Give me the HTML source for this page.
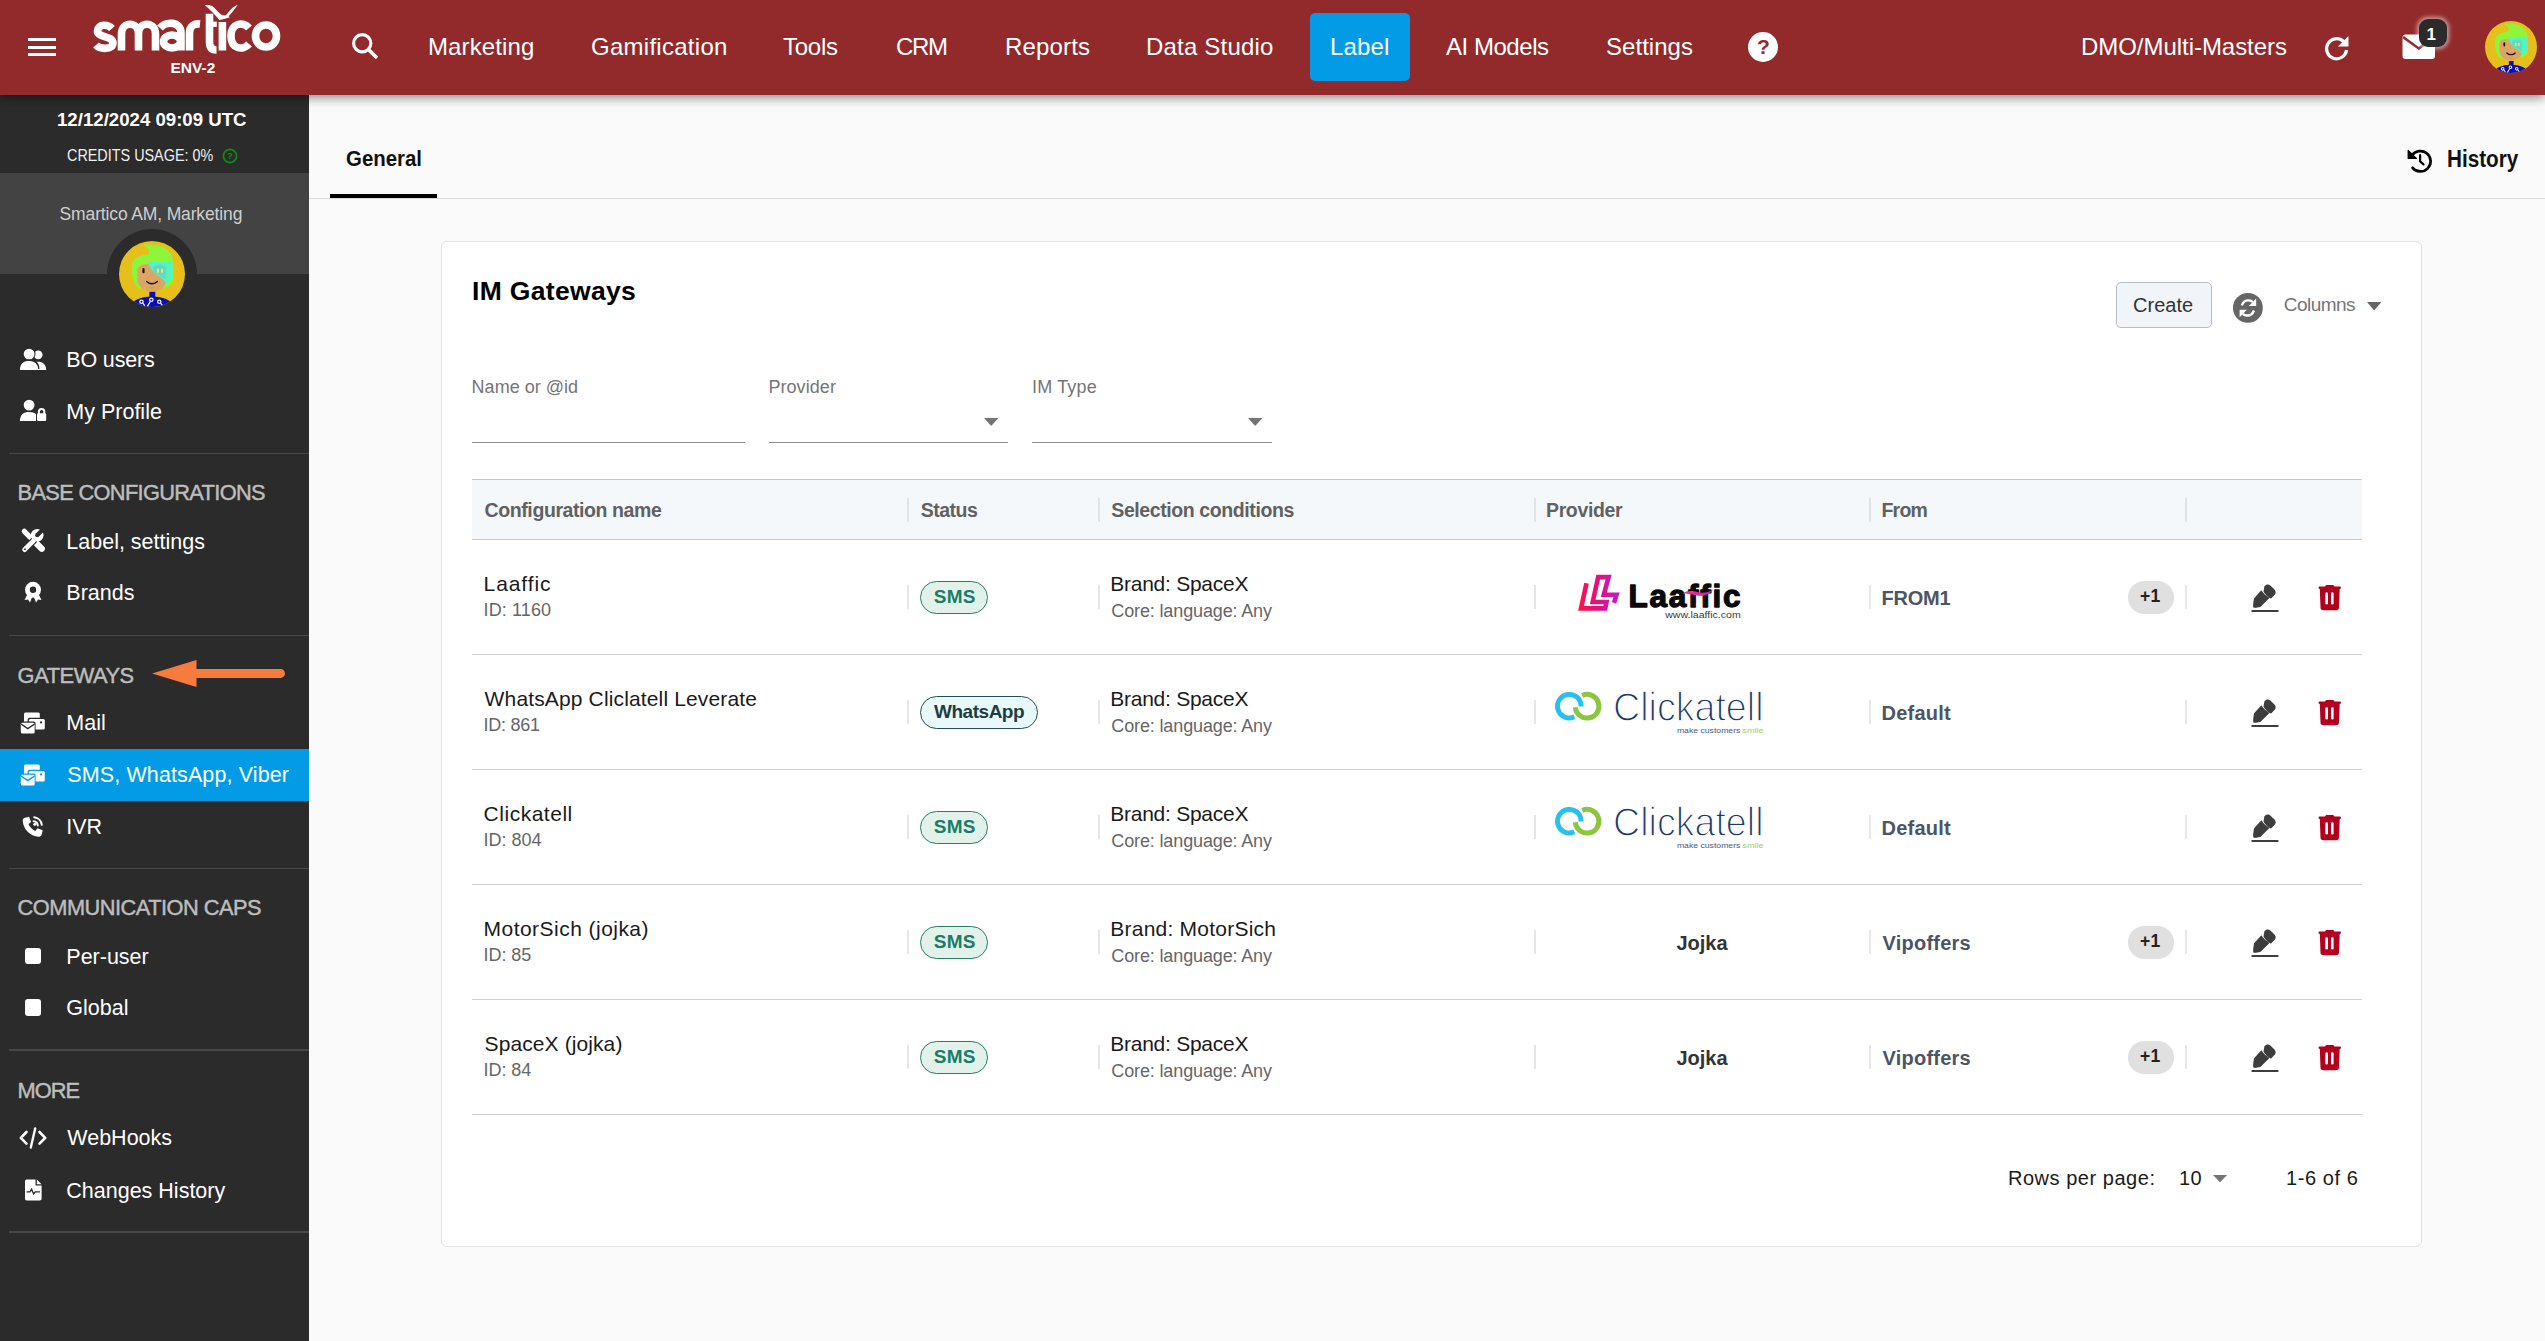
<!DOCTYPE html>
<html><head><meta charset="utf-8"><style>
*{box-sizing:border-box;margin:0;padding:0}
html,body{width:2545px;height:1341px;overflow:hidden;background:#fafafa;font-family:"Liberation Sans",sans-serif}
.a{position:absolute}
.t{position:absolute;white-space:nowrap;line-height:1}
svg{position:absolute;overflow:visible}
</style></head><body>
<div class="a" style="left:309px;top:95px;width:2236px;height:1246px;background:#fafafa"></div>
<div class="a" style="left:0;top:95px;width:309px;height:1246px;background:#2b2b2b"></div>
<div class="a" style="left:0;top:173px;width:309px;height:101px;background:#434343"></div>
<div class="a" style="left:107px;top:229px;width:90px;height:90px;border-radius:50%;background:#2b2b2b;clip-path:inset(0 0 45px 0)"></div>
<div class="a" style="left:0;top:0;width:2545px;height:95px;background:#922a2b;box-shadow:0 2px 11px rgba(0,0,0,.5);z-index:2"></div>
<div class="t" id="t13" style="left:56.8px;top:110.84px;font-size:18.50px;color:#fff;font-weight:bold;transform:scaleX(1.0072);transform-origin:0 0;">12/12/2024 09:09 UTC</div>
<div class="t" id="t14" style="left:66.5px;top:147.95px;font-size:16.60px;color:#f0f0f0;font-weight:normal;transform:scaleX(0.8669);transform-origin:0 0;">CREDITS USAGE: 0%</div>
<svg style="left:221.5px;top:147.6px" width="16" height="16" viewBox="0 0 16 16">
<circle cx="8" cy="8" r="6.6" fill="none" stroke="#118a18" stroke-width="1.7"/>
<text x="8" y="11.4" font-family="Liberation Sans" font-size="9.5" font-weight="bold" fill="#118a18" text-anchor="middle">?</text></svg>
<div class="t" id="t15" style="left:59.6px;top:206.49px;font-size:17.50px;color:#cfcfcf;font-weight:normal;letter-spacing:-0.142px;">Smartico AM, Marketing</div>
<svg style="left:119.0px;top:241.0px" width="66.0" height="66.0" viewBox="0 0 100 100">
<defs><clipPath id="ac152"><circle cx="50" cy="50" r="50"/></clipPath></defs>
<g clip-path="url(#ac152)">
<rect width="100" height="100" fill="#e6bf1b"/>
<path d="M36 6 C52 4 72 6 80 22 C84 32 82 52 82 62 L74 70 L30 72 C20 64 18 46 20 34 C22 26 30 22 44 20 C49 17 44 10 36 6Z" fill="#8ff53a"/>
<path d="M28 44 C28 36 40 34 47 36 L50 36 C60 36 72 46 72 56 C72 70 62 76 50 76 C36 76 28 68 28 56Z" fill="#dca465"/>
<path d="M45 32 H81 V57 L72 65 C66 55 56 52 52 46 C48 42 45 38 45 32Z" fill="#4ff5c4"/>
<path d="M52 40 C56 34 68 34 71 40 L71 58 C64 54 56 50 52 44Z" fill="#66d6c8"/>
<rect x="35.5" y="41" width="3.2" height="8" rx="1.6" fill="#111"/>
<rect x="58" y="42" width="2.4" height="6" fill="#f5f53c"/><rect x="64" y="42" width="2.4" height="6" fill="#f5f53c"/>
<path d="M42 61.5 C46 66 54 66 58 61.5" fill="none" stroke="#111" stroke-width="2.4" stroke-linecap="round"/>
<path d="M48 70 L50 74 L52 70Z" fill="#f08a1a"/>
<rect x="46" y="77" width="9" height="9" fill="#0c0cb8"/>
<ellipse cx="50" cy="100" rx="32" ry="16" fill="#0c0cb8"/>
<g fill="none" stroke="#e8ecff" stroke-width="2"><circle cx="34" cy="92" r="2.5"/><circle cx="49" cy="89" r="2.5"/><circle cx="61" cy="92" r="2.5"/><path d="M47.5 91.5 L43 99 M36 94 L39 98 M63 94 L66 98"/></g>
</g></svg>
<div class="a" style="left:0;top:749px;width:309px;height:52px;background:#039be5"></div>
<svg style="left:19px;top:348px" width="28" height="23" viewBox="0 0 28 23">
<circle cx="19.2" cy="6.8" r="4.4" fill="#fff"/>
<path d="M16 14 C22 13 27 15 27.2 22 H17 Z" fill="#fff"/>
<circle cx="10.1" cy="6.1" r="6.4" fill="#2b2b2b"/>
<circle cx="10.1" cy="6.1" r="5.4" fill="#fff"/>
<path d="M0 22 C0 14 5 12.6 9.8 12.6 C15 12.6 20.4 14 20.4 22 Z" fill="#2b2b2b" transform="translate(0 -1)"/>
<path d="M0.9 22 C0.9 15.5 5 13.1 9.8 13.1 C14.6 13.1 19.3 15.5 19.3 22 Z" fill="#fff"/>
</svg>
<svg style="left:19px;top:399px" width="28" height="23" viewBox="0 0 28 23">
<circle cx="10.1" cy="6.1" r="5.4" fill="#fff"/>
<path d="M0.9 22 C0.9 15.5 5 13.1 9.8 13.1 C13 13.1 15.6 13.8 17 15.2 V22 Z" fill="#fff"/>
<path d="M19.9 15 V12.6 A2.7 2.7 0 0 1 25.3 12.6 V15" fill="none" stroke="#fff" stroke-width="2"/>
<rect x="18" y="14.2" width="9.2" height="7.8" rx="1.2" fill="#fff"/>
</svg>
<svg style="left:21px;top:529px" width="24" height="24" viewBox="0 0 24 24">
<g stroke="#fff" stroke-linecap="round">
<path d="M3.3 2.3 L9.3 8.3" stroke-width="5.2"/>
<path d="M9 8 L15 14" stroke-width="2.2" stroke-linecap="butt"/>
<path d="M15.8 14.8 L20.8 19.8" stroke-width="6.2"/>
</g>
<path d="M3.6 20.6 L12.6 11.6" stroke="#2b2b2b" stroke-width="7" stroke-linecap="round"/>
<path d="M3.6 20.6 L12.6 11.6" stroke="#fff" stroke-width="4.8" stroke-linecap="round"/>
<circle cx="16.2" cy="6.2" r="6.3" fill="#fff"/>
<rect x="14.1" y="-4" width="4.2" height="10.2" fill="#2b2b2b" transform="rotate(45 16.2 6.2)"/>
<circle cx="16.2" cy="6.2" r="2.1" fill="#2b2b2b"/>
<circle cx="4" cy="20.2" r="0.9" fill="#2b2b2b"/></svg>
<svg style="left:23px;top:580px" width="20" height="25" viewBox="0 0 20 25">
<path d="M5 13 L1.5 20 L5 19.6 L7 22.5 L9.5 16 Z M15 13 L18.5 20 L15 19.6 L13 22.5 L10.5 16 Z" fill="#fff"/>
<circle cx="10" cy="9.8" r="8" fill="#fff"/>
<circle cx="10" cy="9.8" r="3.2" fill="#2b2b2b"/></svg>
<svg style="left:20px;top:712.0px" width="26" height="23" viewBox="0 0 26 23">
<rect x="4" y="0.5" width="15.8" height="12" rx="1.5" fill="#fff"/>
<rect x="7.6" y="5.7" width="18" height="12.8" rx="2" fill="#2b2b2b"/>
<rect x="8.9" y="6.9" width="15.9" height="10.6" rx="1.5" fill="#fff"/>
<circle cx="21" cy="10.4" r="1.1" fill="#2b2b2b"/>
<rect x="-0.4" y="9.6" width="16" height="13" rx="2" fill="#2b2b2b"/>
<rect x="0.8" y="10.8" width="13.9" height="10.8" rx="1.5" fill="#fff"/>
<path d="M1 12 L7.8 16.6 L14.6 12" fill="none" stroke="#2b2b2b" stroke-width="1.5"/>
</svg>
<svg style="left:20px;top:764.0px" width="26" height="23" viewBox="0 0 26 23">
<rect x="4" y="0.5" width="15.8" height="12" rx="1.5" fill="#fff"/>
<rect x="7.6" y="5.7" width="18" height="12.8" rx="2" fill="#039be5"/>
<rect x="8.9" y="6.9" width="15.9" height="10.6" rx="1.5" fill="#fff"/>
<circle cx="21" cy="10.4" r="1.1" fill="#039be5"/>
<rect x="-0.4" y="9.6" width="16" height="13" rx="2" fill="#039be5"/>
<rect x="0.8" y="10.8" width="13.9" height="10.8" rx="1.5" fill="#fff"/>
<path d="M1 12 L7.8 16.6 L14.6 12" fill="none" stroke="#039be5" stroke-width="1.5"/>
</svg>
<svg style="left:21px;top:814px" width="24" height="24" viewBox="0 0 24 24">
<path d="M3.5 2.2 L7.6 1.2 L9.6 6.4 L7 8.6 C8.2 11.6 10.8 14.2 13.8 15.4 L16 12.8 L21.2 14.8 L20.2 19 C19.9 20.4 18.7 21.4 17.2 21.2 C8.6 20.6 1.8 13.8 1.2 5.2 C1.1 3.7 2.1 2.5 3.5 2.2 Z" fill="#fff" transform="translate(0.5 1.5)"/>
<path d="M12.5 7.2 A4.8 4.8 0 0 1 16.8 11.5 M13.2 3.2 A8.8 8.8 0 0 1 20.8 10.8" fill="none" stroke="#fff" stroke-width="2" stroke-linecap="round"/>
<circle cx="13.8" cy="10.2" r="1.5" fill="#fff"/></svg>
<div class="a" style="left:24.7px;top:947.5px;width:16.5px;height:16.5px;border-radius:3px;background:#fff"></div>
<div class="a" style="left:24.7px;top:999px;width:16.5px;height:16.5px;border-radius:3px;background:#fff"></div>
<svg style="left:19px;top:1127px" width="28" height="22" viewBox="0 0 28 22">
<path d="M7.5 5 L1.8 10.8 L7.5 16.6 M20.5 5 L26.2 10.8 L20.5 16.6" fill="none" stroke="#fff" stroke-width="2.6" stroke-linecap="round" stroke-linejoin="round"/>
<path d="M16.2 1.5 L11.8 20.5" stroke="#fff" stroke-width="2.4" stroke-linecap="round"/></svg>
<svg style="left:24.5px;top:1178.5px" width="17" height="22" viewBox="0 0 17 22">
<path d="M1.8 0.5 H10.5 V6.5 H16.6 V19.8 C16.6 20.8 15.8 21.5 14.8 21.5 H1.8 C0.8 21.5 0 20.8 0 19.8 V2.2 C0 1.2 0.8 0.5 1.8 0.5Z" fill="#fff"/>
<path d="M11.8 0.5 L16.6 5.3 H11.8Z" fill="#fff"/>
<path d="M1.5 12.8 H5 L6.6 10.2 L8.6 15 L10.2 12.8 H15" fill="none" stroke="#2b2b2b" stroke-width="1.3"/></svg>
<div class="t" id="t16" style="left:66.3px;top:349.80px;font-size:21.50px;color:#fff;font-weight:normal;letter-spacing:-0.166px;">BO users</div>
<div class="t" id="t17" style="left:66.3px;top:401.80px;font-size:21.50px;color:#fff;font-weight:normal;">My Profile</div>
<div class="t" id="t18" style="left:66.3px;top:532.40px;font-size:21.50px;color:#fff;font-weight:normal;">Label, settings</div>
<div class="t" id="t19" style="left:66.3px;top:582.80px;font-size:21.50px;color:#fff;font-weight:normal;">Brands</div>
<div class="t" id="t20" style="left:66.3px;top:712.80px;font-size:21.50px;color:#fff;font-weight:normal;">Mail</div>
<div class="t" id="t21" style="left:67.3px;top:765.30px;font-size:21.50px;color:#fff;font-weight:normal;letter-spacing:0.115px;">SMS, WhatsApp, Viber</div>
<div class="t" id="t22" style="left:66.3px;top:817.30px;font-size:21.50px;color:#fff;font-weight:normal;">IVR</div>
<div class="t" id="t23" style="left:66.3px;top:946.80px;font-size:21.50px;color:#fff;font-weight:normal;">Per-user</div>
<div class="t" id="t24" style="left:66.3px;top:997.80px;font-size:21.50px;color:#fff;font-weight:normal;">Global</div>
<div class="t" id="t25" style="left:67.3px;top:1128.30px;font-size:21.50px;color:#fff;font-weight:normal;">WebHooks</div>
<div class="t" id="t26" style="left:66.3px;top:1180.80px;font-size:21.50px;color:#fff;font-weight:normal;">Changes History</div>
<div class="t" id="t27" style="left:17.6px;top:481.55px;font-size:21.80px;color:#bdbdbd;font-weight:normal;letter-spacing:-0.669px;-webkit-text-stroke:0.45px #bdbdbd;">BASE CONFIGURATIONS</div>
<div class="t" id="t28" style="left:17.6px;top:664.55px;font-size:21.80px;color:#bdbdbd;font-weight:normal;letter-spacing:-0.421px;-webkit-text-stroke:0.45px #bdbdbd;">GATEWAYS</div>
<div class="t" id="t29" style="left:17.6px;top:897.05px;font-size:21.80px;color:#bdbdbd;font-weight:normal;letter-spacing:-0.515px;-webkit-text-stroke:0.45px #bdbdbd;">COMMUNICATION CAPS</div>
<div class="t" id="t30" style="left:17.6px;top:1079.85px;font-size:21.80px;color:#bdbdbd;font-weight:normal;letter-spacing:-1.017px;-webkit-text-stroke:0.45px #bdbdbd;">MORE</div>
<div class="a" style="left:9px;top:452.5px;width:300px;height:1.5px;background:#474747"></div>
<div class="a" style="left:9px;top:634.5px;width:300px;height:1.5px;background:#474747"></div>
<div class="a" style="left:9px;top:867.5px;width:300px;height:1.5px;background:#474747"></div>
<div class="a" style="left:9px;top:1049.0px;width:300px;height:1.5px;background:#474747"></div>
<div class="a" style="left:9px;top:1231.0px;width:300px;height:1.5px;background:#474747"></div>
<svg style="left:150px;top:658px" width="140" height="32" viewBox="0 0 140 32">
<path d="M2 15.4 L46.5 2 V10.9 H130.5 A4.5 4.5 0 0 1 130.5 19.9 H46.5 V29 Z" fill="#f57b3f"/></svg>
<div class="a" style="left:309px;top:198px;width:2236px;height:1px;background:#dcdcdc"></div>
<div class="a" style="left:330px;top:194px;width:107px;height:3.5px;background:#000"></div>
<div class="t" id="t31" style="left:345.6px;top:148.15px;font-size:22.50px;color:#111;font-weight:bold;transform:scaleX(0.9074);transform-origin:0 0;">General</div>
<svg style="left:2405px;top:146px" width="30" height="28" viewBox="0 0 30 28">
<path d="M6.8 9.8 A10.2 10.2 0 1 1 7.6 21.8" fill="none" stroke="#000" stroke-width="2.7" stroke-linecap="round"/>
<path d="M3.2 4.5 L3.2 12.5 L11.4 12.5 Z" fill="#000" stroke="#000" stroke-width="1.2" stroke-linejoin="round"/>
<path d="M15.1 9.2 V15.3 L18.5 18.4" fill="none" stroke="#000" stroke-width="2.2" stroke-linecap="round"/></svg>
<div class="t" id="t32" style="left:2446.9px;top:147.63px;font-size:23.00px;color:#111;font-weight:bold;transform:scaleX(0.8987);transform-origin:0 0;">History</div>
<div class="a" style="left:440.8px;top:240.8px;width:1981.5px;height:1006.5px;background:#fff;border:1px solid #e2e2e2;border-radius:6px"></div>
<div class="t" id="t33" style="left:472.0px;top:278.27px;font-size:26.50px;color:#000;font-weight:bold;letter-spacing:0.320px;">IM Gateways</div>
<div class="a" style="left:2116.4px;top:282.3px;width:95.2px;height:46.2px;background:#f1f5f9;border:1.5px solid #b4bcc6;border-radius:5px"></div>
<div class="t" id="t34" style="left:2133.0px;top:295.27px;font-size:20.00px;color:#333;font-weight:normal;letter-spacing:0.019px;">Create</div>
<svg style="left:2233px;top:293px" width="30" height="30" viewBox="0 0 30 30">
<circle cx="14.9" cy="14.9" r="14.9" fill="#666"/>
<path d="M8.8 12.3 C10.2 8.6 13 7.1 15.8 7.3 C17.5 7.4 19 8.1 20 9" fill="none" stroke="#fff" stroke-width="2.3"/>
<path d="M23.2 5.5 V13.1 H15.8 Z" fill="#fff"/>
<path d="M21 17.5 C19.6 21.2 16.8 22.7 14 22.5 C12.3 22.4 10.8 21.7 9.8 20.8" fill="none" stroke="#fff" stroke-width="2.3"/>
<path d="M6.6 24.3 V16.7 H14 Z" fill="#fff"/></svg>
<div class="t" id="t35" style="left:2283.8px;top:294.52px;font-size:19.00px;color:#757575;font-weight:normal;letter-spacing:-0.545px;">Columns</div>
<svg style="left:2366.8px;top:302.0px" width="14.4" height="8.6" viewBox="0 0 14.4 8.6"><path d="M0 0 H14.4 L7.2 8.6 Z" fill="#666"/></svg>
<div class="t" id="t36" style="left:471.6px;top:378.36px;font-size:18.00px;color:#757575;font-weight:normal;letter-spacing:0.011px;">Name or @id</div>
<div class="a" style="left:472.0px;top:441.5px;width:273.0px;height:1.3px;background:#8e8e8e"></div>
<div class="t" id="t37" style="left:768.4px;top:378.36px;font-size:18.00px;color:#757575;font-weight:normal;letter-spacing:0.067px;">Provider</div>
<div class="a" style="left:768.8px;top:441.5px;width:239.2px;height:1.3px;background:#8e8e8e"></div>
<div class="t" id="t38" style="left:1032.0px;top:378.36px;font-size:18.00px;color:#757575;font-weight:normal;letter-spacing:0.165px;">IM Type</div>
<div class="a" style="left:1032.4px;top:441.5px;width:239.6px;height:1.3px;background:#8e8e8e"></div>
<svg style="left:983.6px;top:417.5px" width="14.4" height="8.0" viewBox="0 0 14.4 8.0"><path d="M0 0 H14.4 L7.2 8.0 Z" fill="#757575"/></svg>
<svg style="left:1247.6px;top:417.5px" width="14.4" height="8.0" viewBox="0 0 14.4 8.0"><path d="M0 0 H14.4 L7.2 8.0 Z" fill="#757575"/></svg>
<div class="a" style="left:472px;top:479px;width:1890px;height:61px;background:#f5f8fb;border-top:1.3px solid #c9c9c9;border-bottom:1.3px solid #c9c9c9"></div>
<div class="t" id="t39" style="left:484.6px;top:501.49px;font-size:19.50px;color:#616161;font-weight:bold;letter-spacing:-0.407px;">Configuration name</div>
<div class="t" id="t40" style="left:920.7px;top:501.49px;font-size:19.50px;color:#616161;font-weight:bold;letter-spacing:-0.510px;">Status</div>
<div class="t" id="t41" style="left:1111.3px;top:501.49px;font-size:19.50px;color:#616161;font-weight:bold;letter-spacing:-0.407px;">Selection conditions</div>
<div class="t" id="t42" style="left:1546.0px;top:501.49px;font-size:19.50px;color:#616161;font-weight:bold;letter-spacing:-0.361px;">Provider</div>
<div class="t" id="t43" style="left:1881.5px;top:501.49px;font-size:19.50px;color:#616161;font-weight:bold;letter-spacing:-0.804px;">From</div>
<div class="a" style="left:907.0px;top:498px;width:2px;height:24px;background:#e3e3e3"></div>
<div class="a" style="left:1098.0px;top:498px;width:2px;height:24px;background:#e3e3e3"></div>
<div class="a" style="left:1533.5px;top:498px;width:2px;height:24px;background:#e3e3e3"></div>
<div class="a" style="left:1869.0px;top:498px;width:2px;height:24px;background:#e3e3e3"></div>
<div class="a" style="left:2185.0px;top:498px;width:2px;height:24px;background:#e3e3e3"></div>
<div class="a" style="left:472px;top:654.0px;width:1890px;height:1.3px;background:#cfcfcf"></div>
<div class="a" style="left:907.0px;top:585.0px;width:2px;height:24px;background:#e6e6e6"></div>
<div class="a" style="left:1098.0px;top:585.0px;width:2px;height:24px;background:#e6e6e6"></div>
<div class="a" style="left:1533.5px;top:585.0px;width:2px;height:24px;background:#e6e6e6"></div>
<div class="a" style="left:1869.0px;top:585.0px;width:2px;height:24px;background:#e6e6e6"></div>
<div class="a" style="left:2185.0px;top:585.0px;width:2px;height:24px;background:#e6e6e6"></div>
<div class="t" id="t44" style="left:483.6px;top:573.22px;font-size:21.00px;color:#1a1a1a;font-weight:normal;letter-spacing:0.901px;">Laaffic</div>
<div class="t" id="t45" style="left:483.6px;top:601.36px;font-size:18.00px;color:#666;font-weight:normal;letter-spacing:0.100px;">ID: 1160</div>
<div class="a" style="left:920px;top:580.8px;width:68px;height:33px;border-radius:17px;background:#e2f2eb;border:1.4px solid #237f68"></div>
<div class="t" id="t46" style="left:933.8px;top:586.82px;font-size:19.00px;color:#1a7d68;font-weight:bold;letter-spacing:0.200px;">SMS</div>
<div class="t" id="t47" style="left:1110.3px;top:572.97px;font-size:21.00px;color:#1a1a1a;font-weight:normal;letter-spacing:-0.263px;">Brand: SpaceX</div>
<div class="t" id="t48" style="left:1111.3px;top:601.96px;font-size:18.00px;color:#666;font-weight:normal;letter-spacing:-0.134px;">Core: language: Any</div>
<svg style="left:1572.0px;top:570.0px" width="175" height="52" viewBox="0 0 175 52">
<defs><linearGradient id="lg570" x1="0" y1="0" x2="1" y2="0"><stop offset="0" stop-color="#ff0f4f"/><stop offset="0.55" stop-color="#e0108a"/><stop offset="1" stop-color="#c21cc4"/></linearGradient>
<linearGradient id="lh570" x1="0" y1="0" x2="1" y2="0"><stop offset="0" stop-color="#ff2f7a"/><stop offset="1" stop-color="#c01fc6"/></linearGradient></defs>
<path d="M14.5 13.3 L9 38.4 H33.2 L34.5 32 H20.7 L26.2 7.1 H36.6 L31.8 24.8 H44.6 L42 32.9" fill="none" stroke="url(#lg570)" stroke-width="4.6" stroke-linejoin="miter" stroke-miterlimit="10"/>
<text x="56.5" y="36.5" font-family="Liberation Sans" font-weight="bold" font-size="31.5" fill="#0a0a0a" stroke="#0a0a0a" stroke-width="1.3" stroke-linejoin="round" textLength="112" lengthAdjust="spacing">Laaffic</text>
<path d="M110.5 23.8 C115 19.8 121 20.8 126 22.2 C131 23.5 136 22.8 141 19.8 C137 25 131 26.5 125.5 25.6 C120 24.8 115 22.8 110.5 23.8Z" fill="url(#lh570)"/>
<text x="93.2" y="48.2" font-family="Liberation Sans" font-size="8.8" fill="#3a3a3a" textLength="75.5" lengthAdjust="spacingAndGlyphs">www.laaffic.com</text>
</svg>
<div class="t" id="t49" style="left:1881.5px;top:587.67px;font-size:20.00px;color:#4b5563;font-weight:bold;letter-spacing:-0.219px;">FROM1</div>
<div class="a" style="left:2128px;top:581.0px;width:45.6px;height:32.8px;border-radius:16.4px;background:#e0e0e0"></div>
<div class="t" id="t50" style="left:2140.0px;top:587.79px;font-size:17.50px;color:#222;font-weight:bold;letter-spacing:0.180px;">+1</div>
<svg style="left:2250.5px;top:583.0px" width="28" height="28" viewBox="0 0 28 28">
<path d="M13.4 3.3 C15.3 1.3 17.6 0.9 19.6 2.7 L23.5 6.4 C25.3 8.3 25 10.8 23 12.6 L20.1 15.6 C17.4 14.9 13.6 10.8 12.5 8.5 Z" fill="#3d3d3d" transform="translate(0 0)"/>
<path d="M10.6 8.9 C12.3 11.6 15.5 14.7 18.8 16.7 L9.6 25.8 C6.3 26.4 4 26.8 2.8 26.3 C2.1 25.6 2.4 21.9 3.4 16.9 Z" fill="#3d3d3d" transform="translate(-0.3 -1.7)"/>
<path d="M1.3 27.9 H26.7" stroke="#3d3d3d" stroke-width="2" stroke-linecap="round"/></svg>
<svg style="left:2317.5px;top:584.9px" width="24" height="26" viewBox="0 0 24 26">
<path d="M7.2 1.2 C7.5 0.3 8.2 0 9 0 H14.5 C15.3 0 15.9 0.3 16.3 1.2 L16.6 1.6 H21.8 C22.6 1.6 23 2.2 23 2.8 C23 3.4 22.6 4 21.8 4 H1.7 C0.9 4 0.5 3.4 0.5 2.8 C0.5 2.2 0.9 1.6 1.7 1.6 H6.9 Z" fill="#b3001f"/>
<path d="M1.8 4 H21.7 L21 22.5 C21 24.2 19.8 25.2 18.2 25.2 H5.3 C3.7 25.2 2.5 24.2 2.5 22.5 Z" fill="#b3001f"/>
<rect x="7.4" y="7.2" width="2.6" height="12.3" rx="1.3" fill="#fff"/>
<rect x="13" y="7.2" width="2.6" height="12.3" rx="1.3" fill="#fff"/></svg>
<div class="a" style="left:472px;top:769.0px;width:1890px;height:1.3px;background:#cfcfcf"></div>
<div class="a" style="left:907.0px;top:700.0px;width:2px;height:24px;background:#e6e6e6"></div>
<div class="a" style="left:1098.0px;top:700.0px;width:2px;height:24px;background:#e6e6e6"></div>
<div class="a" style="left:1533.5px;top:700.0px;width:2px;height:24px;background:#e6e6e6"></div>
<div class="a" style="left:1869.0px;top:700.0px;width:2px;height:24px;background:#e6e6e6"></div>
<div class="a" style="left:2185.0px;top:700.0px;width:2px;height:24px;background:#e6e6e6"></div>
<div class="t" id="t51" style="left:484.6px;top:688.22px;font-size:21.00px;color:#1a1a1a;font-weight:normal;letter-spacing:0.142px;">WhatsApp Cliclatell Leverate</div>
<div class="t" id="t52" style="left:483.6px;top:716.36px;font-size:18.00px;color:#666;font-weight:normal;letter-spacing:-0.287px;">ID: 861</div>
<div class="a" style="left:920px;top:695.8px;width:117.6px;height:33px;border-radius:17px;background:#e9f9f9;border:1.4px solid #224f55"></div>
<div class="t" id="t53" style="left:934.0px;top:701.82px;font-size:19.00px;color:#1d3d42;font-weight:bold;letter-spacing:-0.475px;">WhatsApp</div>
<div class="t" id="t54" style="left:1110.3px;top:687.97px;font-size:21.00px;color:#1a1a1a;font-weight:normal;letter-spacing:-0.263px;">Brand: SpaceX</div>
<div class="t" id="t55" style="left:1111.3px;top:716.96px;font-size:18.00px;color:#666;font-weight:normal;letter-spacing:-0.134px;">Core: language: Any</div>
<svg style="left:1550.0px;top:685.0px" width="220" height="52" viewBox="0 0 220 52">
<path d="M24.36 31.86 A11.8 11.8 0 1 1 31.1 21.53" fill="none" stroke="#29c1eb" stroke-width="5"/>
<path d="M32.2 10.46 A11.8 11.8 0 1 1 25.35 22.2" fill="none" stroke="#8cc63e" stroke-width="5"/>
<text x="63" y="35.6" font-family="Liberation Sans" font-size="40.5" fill="#1d3865" stroke="#fff" stroke-width="1.35" textLength="150.5" lengthAdjust="spacingAndGlyphs">Clickatell</text>
<text x="126.9" y="47.9" font-family="Liberation Sans" font-size="7.6" fill="#3f5b88" textLength="63.5" lengthAdjust="spacingAndGlyphs">make customers</text>
<text x="192.3" y="47.9" font-family="Liberation Sans" font-size="7.6" fill="#9dcf5c" textLength="21.4" lengthAdjust="spacingAndGlyphs">smile</text>
</svg>
<div class="t" id="t56" style="left:1881.5px;top:702.67px;font-size:20.00px;color:#4b5563;font-weight:bold;letter-spacing:0.246px;">Default</div>
<svg style="left:2250.5px;top:698.0px" width="28" height="28" viewBox="0 0 28 28">
<path d="M13.4 3.3 C15.3 1.3 17.6 0.9 19.6 2.7 L23.5 6.4 C25.3 8.3 25 10.8 23 12.6 L20.1 15.6 C17.4 14.9 13.6 10.8 12.5 8.5 Z" fill="#3d3d3d" transform="translate(0 0)"/>
<path d="M10.6 8.9 C12.3 11.6 15.5 14.7 18.8 16.7 L9.6 25.8 C6.3 26.4 4 26.8 2.8 26.3 C2.1 25.6 2.4 21.9 3.4 16.9 Z" fill="#3d3d3d" transform="translate(-0.3 -1.7)"/>
<path d="M1.3 27.9 H26.7" stroke="#3d3d3d" stroke-width="2" stroke-linecap="round"/></svg>
<svg style="left:2317.5px;top:699.9px" width="24" height="26" viewBox="0 0 24 26">
<path d="M7.2 1.2 C7.5 0.3 8.2 0 9 0 H14.5 C15.3 0 15.9 0.3 16.3 1.2 L16.6 1.6 H21.8 C22.6 1.6 23 2.2 23 2.8 C23 3.4 22.6 4 21.8 4 H1.7 C0.9 4 0.5 3.4 0.5 2.8 C0.5 2.2 0.9 1.6 1.7 1.6 H6.9 Z" fill="#b3001f"/>
<path d="M1.8 4 H21.7 L21 22.5 C21 24.2 19.8 25.2 18.2 25.2 H5.3 C3.7 25.2 2.5 24.2 2.5 22.5 Z" fill="#b3001f"/>
<rect x="7.4" y="7.2" width="2.6" height="12.3" rx="1.3" fill="#fff"/>
<rect x="13" y="7.2" width="2.6" height="12.3" rx="1.3" fill="#fff"/></svg>
<div class="a" style="left:472px;top:884.0px;width:1890px;height:1.3px;background:#cfcfcf"></div>
<div class="a" style="left:907.0px;top:815.0px;width:2px;height:24px;background:#e6e6e6"></div>
<div class="a" style="left:1098.0px;top:815.0px;width:2px;height:24px;background:#e6e6e6"></div>
<div class="a" style="left:1533.5px;top:815.0px;width:2px;height:24px;background:#e6e6e6"></div>
<div class="a" style="left:1869.0px;top:815.0px;width:2px;height:24px;background:#e6e6e6"></div>
<div class="a" style="left:2185.0px;top:815.0px;width:2px;height:24px;background:#e6e6e6"></div>
<div class="t" id="t57" style="left:483.6px;top:803.22px;font-size:21.00px;color:#1a1a1a;font-weight:normal;letter-spacing:0.516px;">Clickatell</div>
<div class="t" id="t58" style="left:483.6px;top:831.36px;font-size:18.00px;color:#666;font-weight:normal;letter-spacing:-0.004px;">ID: 804</div>
<div class="a" style="left:920px;top:810.8px;width:68px;height:33px;border-radius:17px;background:#e2f2eb;border:1.4px solid #237f68"></div>
<div class="t" id="t59" style="left:933.8px;top:816.82px;font-size:19.00px;color:#1a7d68;font-weight:bold;letter-spacing:0.200px;">SMS</div>
<div class="t" id="t60" style="left:1110.3px;top:802.97px;font-size:21.00px;color:#1a1a1a;font-weight:normal;letter-spacing:-0.263px;">Brand: SpaceX</div>
<div class="t" id="t61" style="left:1111.3px;top:831.96px;font-size:18.00px;color:#666;font-weight:normal;letter-spacing:-0.134px;">Core: language: Any</div>
<svg style="left:1550.0px;top:800.0px" width="220" height="52" viewBox="0 0 220 52">
<path d="M24.36 31.86 A11.8 11.8 0 1 1 31.1 21.53" fill="none" stroke="#29c1eb" stroke-width="5"/>
<path d="M32.2 10.46 A11.8 11.8 0 1 1 25.35 22.2" fill="none" stroke="#8cc63e" stroke-width="5"/>
<text x="63" y="35.6" font-family="Liberation Sans" font-size="40.5" fill="#1d3865" stroke="#fff" stroke-width="1.35" textLength="150.5" lengthAdjust="spacingAndGlyphs">Clickatell</text>
<text x="126.9" y="47.9" font-family="Liberation Sans" font-size="7.6" fill="#3f5b88" textLength="63.5" lengthAdjust="spacingAndGlyphs">make customers</text>
<text x="192.3" y="47.9" font-family="Liberation Sans" font-size="7.6" fill="#9dcf5c" textLength="21.4" lengthAdjust="spacingAndGlyphs">smile</text>
</svg>
<div class="t" id="t62" style="left:1881.5px;top:817.67px;font-size:20.00px;color:#4b5563;font-weight:bold;letter-spacing:0.246px;">Default</div>
<svg style="left:2250.5px;top:813.0px" width="28" height="28" viewBox="0 0 28 28">
<path d="M13.4 3.3 C15.3 1.3 17.6 0.9 19.6 2.7 L23.5 6.4 C25.3 8.3 25 10.8 23 12.6 L20.1 15.6 C17.4 14.9 13.6 10.8 12.5 8.5 Z" fill="#3d3d3d" transform="translate(0 0)"/>
<path d="M10.6 8.9 C12.3 11.6 15.5 14.7 18.8 16.7 L9.6 25.8 C6.3 26.4 4 26.8 2.8 26.3 C2.1 25.6 2.4 21.9 3.4 16.9 Z" fill="#3d3d3d" transform="translate(-0.3 -1.7)"/>
<path d="M1.3 27.9 H26.7" stroke="#3d3d3d" stroke-width="2" stroke-linecap="round"/></svg>
<svg style="left:2317.5px;top:814.9px" width="24" height="26" viewBox="0 0 24 26">
<path d="M7.2 1.2 C7.5 0.3 8.2 0 9 0 H14.5 C15.3 0 15.9 0.3 16.3 1.2 L16.6 1.6 H21.8 C22.6 1.6 23 2.2 23 2.8 C23 3.4 22.6 4 21.8 4 H1.7 C0.9 4 0.5 3.4 0.5 2.8 C0.5 2.2 0.9 1.6 1.7 1.6 H6.9 Z" fill="#b3001f"/>
<path d="M1.8 4 H21.7 L21 22.5 C21 24.2 19.8 25.2 18.2 25.2 H5.3 C3.7 25.2 2.5 24.2 2.5 22.5 Z" fill="#b3001f"/>
<rect x="7.4" y="7.2" width="2.6" height="12.3" rx="1.3" fill="#fff"/>
<rect x="13" y="7.2" width="2.6" height="12.3" rx="1.3" fill="#fff"/></svg>
<div class="a" style="left:472px;top:999.0px;width:1890px;height:1.3px;background:#cfcfcf"></div>
<div class="a" style="left:907.0px;top:930.0px;width:2px;height:24px;background:#e6e6e6"></div>
<div class="a" style="left:1098.0px;top:930.0px;width:2px;height:24px;background:#e6e6e6"></div>
<div class="a" style="left:1533.5px;top:930.0px;width:2px;height:24px;background:#e6e6e6"></div>
<div class="a" style="left:1869.0px;top:930.0px;width:2px;height:24px;background:#e6e6e6"></div>
<div class="a" style="left:2185.0px;top:930.0px;width:2px;height:24px;background:#e6e6e6"></div>
<div class="t" id="t63" style="left:483.6px;top:918.22px;font-size:21.00px;color:#1a1a1a;font-weight:normal;letter-spacing:0.460px;">MotorSich (jojka)</div>
<div class="t" id="t64" style="left:483.6px;top:946.36px;font-size:18.00px;color:#666;font-weight:normal;letter-spacing:-0.063px;">ID: 85</div>
<div class="a" style="left:920px;top:925.8px;width:68px;height:33px;border-radius:17px;background:#e2f2eb;border:1.4px solid #237f68"></div>
<div class="t" id="t65" style="left:933.8px;top:931.82px;font-size:19.00px;color:#1a7d68;font-weight:bold;letter-spacing:0.200px;">SMS</div>
<div class="t" id="t66" style="left:1110.3px;top:917.97px;font-size:21.00px;color:#1a1a1a;font-weight:normal;letter-spacing:0.229px;">Brand: MotorSich</div>
<div class="t" id="t67" style="left:1111.3px;top:946.96px;font-size:18.00px;color:#666;font-weight:normal;letter-spacing:-0.134px;">Core: language: Any</div>
<div class="t" id="t68" style="left:1676.5px;top:932.67px;font-size:20.00px;color:#333;font-weight:bold;letter-spacing:-0.030px;">Jojka</div>
<div class="t" id="t69" style="left:1882.5px;top:932.67px;font-size:20.00px;color:#4b5563;font-weight:bold;letter-spacing:0.238px;">Vipoffers</div>
<div class="a" style="left:2128px;top:926.0px;width:45.6px;height:32.8px;border-radius:16.4px;background:#e0e0e0"></div>
<div class="t" id="t70" style="left:2140.0px;top:932.79px;font-size:17.50px;color:#222;font-weight:bold;letter-spacing:0.180px;">+1</div>
<svg style="left:2250.5px;top:928.0px" width="28" height="28" viewBox="0 0 28 28">
<path d="M13.4 3.3 C15.3 1.3 17.6 0.9 19.6 2.7 L23.5 6.4 C25.3 8.3 25 10.8 23 12.6 L20.1 15.6 C17.4 14.9 13.6 10.8 12.5 8.5 Z" fill="#3d3d3d" transform="translate(0 0)"/>
<path d="M10.6 8.9 C12.3 11.6 15.5 14.7 18.8 16.7 L9.6 25.8 C6.3 26.4 4 26.8 2.8 26.3 C2.1 25.6 2.4 21.9 3.4 16.9 Z" fill="#3d3d3d" transform="translate(-0.3 -1.7)"/>
<path d="M1.3 27.9 H26.7" stroke="#3d3d3d" stroke-width="2" stroke-linecap="round"/></svg>
<svg style="left:2317.5px;top:929.9px" width="24" height="26" viewBox="0 0 24 26">
<path d="M7.2 1.2 C7.5 0.3 8.2 0 9 0 H14.5 C15.3 0 15.9 0.3 16.3 1.2 L16.6 1.6 H21.8 C22.6 1.6 23 2.2 23 2.8 C23 3.4 22.6 4 21.8 4 H1.7 C0.9 4 0.5 3.4 0.5 2.8 C0.5 2.2 0.9 1.6 1.7 1.6 H6.9 Z" fill="#b3001f"/>
<path d="M1.8 4 H21.7 L21 22.5 C21 24.2 19.8 25.2 18.2 25.2 H5.3 C3.7 25.2 2.5 24.2 2.5 22.5 Z" fill="#b3001f"/>
<rect x="7.4" y="7.2" width="2.6" height="12.3" rx="1.3" fill="#fff"/>
<rect x="13" y="7.2" width="2.6" height="12.3" rx="1.3" fill="#fff"/></svg>
<div class="a" style="left:472px;top:1114.0px;width:1890px;height:1.3px;background:#cfcfcf"></div>
<div class="a" style="left:907.0px;top:1045.0px;width:2px;height:24px;background:#e6e6e6"></div>
<div class="a" style="left:1098.0px;top:1045.0px;width:2px;height:24px;background:#e6e6e6"></div>
<div class="a" style="left:1533.5px;top:1045.0px;width:2px;height:24px;background:#e6e6e6"></div>
<div class="a" style="left:1869.0px;top:1045.0px;width:2px;height:24px;background:#e6e6e6"></div>
<div class="a" style="left:2185.0px;top:1045.0px;width:2px;height:24px;background:#e6e6e6"></div>
<div class="t" id="t71" style="left:484.6px;top:1033.22px;font-size:21.00px;color:#1a1a1a;font-weight:normal;letter-spacing:0.095px;">SpaceX (jojka)</div>
<div class="t" id="t72" style="left:483.6px;top:1061.36px;font-size:18.00px;color:#666;font-weight:normal;letter-spacing:-0.063px;">ID: 84</div>
<div class="a" style="left:920px;top:1040.8px;width:68px;height:33px;border-radius:17px;background:#e2f2eb;border:1.4px solid #237f68"></div>
<div class="t" id="t73" style="left:933.8px;top:1046.82px;font-size:19.00px;color:#1a7d68;font-weight:bold;letter-spacing:0.200px;">SMS</div>
<div class="t" id="t74" style="left:1110.3px;top:1032.97px;font-size:21.00px;color:#1a1a1a;font-weight:normal;letter-spacing:-0.263px;">Brand: SpaceX</div>
<div class="t" id="t75" style="left:1111.3px;top:1061.96px;font-size:18.00px;color:#666;font-weight:normal;letter-spacing:-0.134px;">Core: language: Any</div>
<div class="t" id="t76" style="left:1676.5px;top:1047.67px;font-size:20.00px;color:#333;font-weight:bold;letter-spacing:-0.030px;">Jojka</div>
<div class="t" id="t77" style="left:1882.5px;top:1047.67px;font-size:20.00px;color:#4b5563;font-weight:bold;letter-spacing:0.238px;">Vipoffers</div>
<div class="a" style="left:2128px;top:1041.0px;width:45.6px;height:32.8px;border-radius:16.4px;background:#e0e0e0"></div>
<div class="t" id="t78" style="left:2140.0px;top:1047.79px;font-size:17.50px;color:#222;font-weight:bold;letter-spacing:0.180px;">+1</div>
<svg style="left:2250.5px;top:1043.0px" width="28" height="28" viewBox="0 0 28 28">
<path d="M13.4 3.3 C15.3 1.3 17.6 0.9 19.6 2.7 L23.5 6.4 C25.3 8.3 25 10.8 23 12.6 L20.1 15.6 C17.4 14.9 13.6 10.8 12.5 8.5 Z" fill="#3d3d3d" transform="translate(0 0)"/>
<path d="M10.6 8.9 C12.3 11.6 15.5 14.7 18.8 16.7 L9.6 25.8 C6.3 26.4 4 26.8 2.8 26.3 C2.1 25.6 2.4 21.9 3.4 16.9 Z" fill="#3d3d3d" transform="translate(-0.3 -1.7)"/>
<path d="M1.3 27.9 H26.7" stroke="#3d3d3d" stroke-width="2" stroke-linecap="round"/></svg>
<svg style="left:2317.5px;top:1044.9px" width="24" height="26" viewBox="0 0 24 26">
<path d="M7.2 1.2 C7.5 0.3 8.2 0 9 0 H14.5 C15.3 0 15.9 0.3 16.3 1.2 L16.6 1.6 H21.8 C22.6 1.6 23 2.2 23 2.8 C23 3.4 22.6 4 21.8 4 H1.7 C0.9 4 0.5 3.4 0.5 2.8 C0.5 2.2 0.9 1.6 1.7 1.6 H6.9 Z" fill="#b3001f"/>
<path d="M1.8 4 H21.7 L21 22.5 C21 24.2 19.8 25.2 18.2 25.2 H5.3 C3.7 25.2 2.5 24.2 2.5 22.5 Z" fill="#b3001f"/>
<rect x="7.4" y="7.2" width="2.6" height="12.3" rx="1.3" fill="#fff"/>
<rect x="13" y="7.2" width="2.6" height="12.3" rx="1.3" fill="#fff"/></svg>
<div class="t" id="t79" style="left:2008.0px;top:1167.67px;font-size:20.00px;color:#1a1a1a;font-weight:normal;letter-spacing:0.529px;">Rows per page:</div>
<div class="t" id="t80" style="left:2179.0px;top:1167.67px;font-size:20.00px;color:#1a1a1a;font-weight:normal;letter-spacing:0.277px;">10</div>
<svg style="left:2213.0px;top:1175.0px" width="14.1" height="7.3" viewBox="0 0 14.1 7.3"><path d="M0 0 H14.1 L7.0 7.3 Z" fill="#757575"/></svg>
<div class="t" id="t81" style="left:2286.1px;top:1167.67px;font-size:20.00px;color:#1a1a1a;font-weight:normal;letter-spacing:0.557px;">1-6 of 6</div>
<div class="a" style="left:0;top:0;width:2545px;height:95px;z-index:3">
<div class="a" style="left:28px;top:38.0px;width:28px;height:3px;background:#fff"></div>
<div class="a" style="left:28px;top:45.5px;width:28px;height:3px;background:#fff"></div>
<div class="a" style="left:28px;top:53.0px;width:28px;height:3px;background:#fff"></div>
<svg style="left:0;top:0" width="300" height="95" viewBox="0 0 300 95">
<g fill="none" stroke="#fff" stroke-width="7.6" stroke-linecap="butt">
 <path d="M112 28.5 C108 24 98 23.5 97.5 31 C97 37.5 113 35.5 113 43 C113 50 100 49.5 96 45"/>
 <path d="M121.5 50.5 V34 C121.5 21 138.5 21 138.5 34 V50.5 M138.5 34 C138.5 21 155.5 21 155.5 34 V50.5"/>
 <path d="M160 28 C166 21 181 21 181 33 V50.5"/>
 <ellipse cx="172" cy="41.5" rx="8.5" ry="6.5"/>
 <path d="M189.5 50.5 V33 C189.5 25 195 23.5 200 24"/>
 <path d="M209.5 13.8 V42 C209.5 47.5 212 50 216.5 50"/>
 <path d="M209.5 24.3 H216.8" stroke-width="5.3"/>
 <path d="M222.4 22 V50.5"/>
 <path d="M249 28 C243 21 231 23 231 36 C231 49 243 51 249 44"/>
 <ellipse cx="266" cy="36" rx="10.5" ry="11"/>
</g>
<path d="M204.8 5.2 C207.5 4.7 211 4.9 213.5 6.9 C216 9 219 13.2 221.5 14.8 C223.5 16 225.5 15.8 227 14.2 C229.5 10.5 233 6.3 237.8 5 C235.5 8 232 13 228.5 16.3 L229.8 17.3 C227 18.3 223 19.6 219.3 19.9 C215 15 210 9 204.8 5.2 Z" fill="#fff"/>
</svg>
<div class="t" id="t0" style="left:170.5px;top:60.38px;font-size:15.50px;color:#fff;font-weight:bold;letter-spacing:0.031px;">ENV-2</div>
<svg style="left:350px;top:31px" width="30" height="30" viewBox="0 0 30 30">
<circle cx="12.2" cy="12.2" r="8.6" fill="none" stroke="#fff" stroke-width="3.2"/>
<path d="M18.5 18.5 L27 27" stroke="#fff" stroke-width="3.6"/></svg>
<div class="a" style="left:1310px;top:13px;width:100px;height:68px;background:#039be5;border-radius:5px"></div>
<div class="t" id="t1" style="left:428.0px;top:34.68px;font-size:24.00px;color:#fff;font-weight:normal;letter-spacing:0.122px;">Marketing</div>
<div class="t" id="t2" style="left:591.0px;top:34.68px;font-size:24.00px;color:#fff;font-weight:normal;letter-spacing:0.270px;">Gamification</div>
<div class="t" id="t3" style="left:783.0px;top:34.68px;font-size:24.00px;color:#fff;font-weight:normal;letter-spacing:-0.257px;">Tools</div>
<div class="t" id="t4" style="left:896.0px;top:34.68px;font-size:24.00px;color:#fff;font-weight:normal;letter-spacing:-1.332px;">CRM</div>
<div class="t" id="t5" style="left:1005.0px;top:34.68px;font-size:24.00px;color:#fff;font-weight:normal;letter-spacing:0.161px;">Reports</div>
<div class="t" id="t6" style="left:1146.0px;top:34.68px;font-size:24.00px;color:#fff;font-weight:normal;letter-spacing:0.193px;">Data Studio</div>
<div class="t" id="t7" style="left:1330.0px;top:34.68px;font-size:24.00px;color:#fff;font-weight:normal;letter-spacing:0.152px;">Label</div>
<div class="t" id="t8" style="left:1446.0px;top:34.68px;font-size:24.00px;color:#fff;font-weight:normal;letter-spacing:-0.464px;">AI Models</div>
<div class="t" id="t9" style="left:1606.0px;top:34.68px;font-size:24.00px;color:#fff;font-weight:normal;letter-spacing:0.040px;">Settings</div>
<div class="t" id="t10" style="left:2081.0px;top:34.68px;font-size:24.00px;color:#fff;font-weight:normal;letter-spacing:-0.042px;">DMO/Multi-Masters</div>
<div class="a" style="left:1748px;top:32px;width:30px;height:30px;border-radius:50%;background:#fff"></div>
<div class="t" id="t11" style="left:1757.0px;top:36.42px;font-size:21.00px;color:#922a2b;font-weight:bold;">?</div>
<svg style="left:2322px;top:33px" width="30" height="30" viewBox="0 0 30 30">
<path d="M21.5 8.5 A10 10 0 1 0 24.5 17" fill="none" stroke="#fff" stroke-width="3.2"/>
<path d="M26.5 3 V13.5 H16 Z" fill="#fff"/></svg>
<svg style="left:2402px;top:34px" width="34" height="26" viewBox="0 0 34 26">
<rect x="0.5" y="0.5" width="32.5" height="24.5" rx="3" fill="#fff"/>
<path d="M1 3 L16.8 14.5 L32.5 3" fill="none" stroke="#922a2b" stroke-width="2.6"/></svg>
<div class="a" style="left:2419px;top:19px;width:28px;height:28px;border-radius:9px;background:#2b2b2b;box-shadow:0 0 4px 2px rgba(255,255,255,.55)"></div>
<div class="t" id="t12" style="left:2426.5px;top:25.61px;font-size:17.00px;color:#fff;font-weight:bold;">1</div>
<svg style="left:2485.0px;top:21.0px" width="52.0" height="52.0" viewBox="0 0 100 100">
<defs><clipPath id="ac2511"><circle cx="50" cy="50" r="50"/></clipPath></defs>
<g clip-path="url(#ac2511)">
<rect width="100" height="100" fill="#e6bf1b"/>
<path d="M36 6 C52 4 72 6 80 22 C84 32 82 52 82 62 L74 70 L30 72 C20 64 18 46 20 34 C22 26 30 22 44 20 C49 17 44 10 36 6Z" fill="#8ff53a"/>
<path d="M28 44 C28 36 40 34 47 36 L50 36 C60 36 72 46 72 56 C72 70 62 76 50 76 C36 76 28 68 28 56Z" fill="#dca465"/>
<path d="M45 32 H81 V57 L72 65 C66 55 56 52 52 46 C48 42 45 38 45 32Z" fill="#4ff5c4"/>
<path d="M52 40 C56 34 68 34 71 40 L71 58 C64 54 56 50 52 44Z" fill="#66d6c8"/>
<rect x="35.5" y="41" width="3.2" height="8" rx="1.6" fill="#111"/>
<rect x="58" y="42" width="2.4" height="6" fill="#f5f53c"/><rect x="64" y="42" width="2.4" height="6" fill="#f5f53c"/>
<path d="M42 61.5 C46 66 54 66 58 61.5" fill="none" stroke="#111" stroke-width="2.4" stroke-linecap="round"/>
<path d="M48 70 L50 74 L52 70Z" fill="#f08a1a"/>
<rect x="46" y="77" width="9" height="9" fill="#0c0cb8"/>
<ellipse cx="50" cy="100" rx="32" ry="16" fill="#0c0cb8"/>
<g fill="none" stroke="#e8ecff" stroke-width="2"><circle cx="34" cy="92" r="2.5"/><circle cx="49" cy="89" r="2.5"/><circle cx="61" cy="92" r="2.5"/><path d="M47.5 91.5 L43 99 M36 94 L39 98 M63 94 L66 98"/></g>
</g></svg>
</div>
</body></html>
